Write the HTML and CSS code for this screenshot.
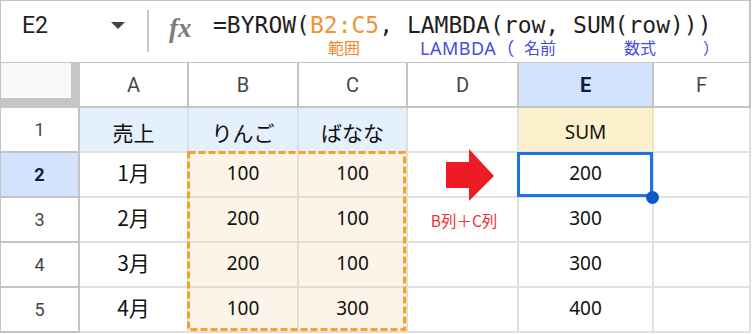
FILE: index.html
```html
<!DOCTYPE html>
<html lang="ja">
<head>
    <meta charset="UTF-8">
    <title>BYROW</title>
    <link rel="stylesheet" href="styles.css">
</head>
<body>
    <div class="sheet">
        <div class="formula-bar">
            <div class="name-box">
                <span class="cell-ref">E2</span>
                <span class="caret"></span>
            </div>
            <div class="divider"></div>
            <div class="fx">fx</div>
            <div class="formula">
                <div class="formula-text">=BYROW(<span class="range">B2:C5</span>, LAMBDA(row, SUM(row)))</div>
                <div class="notes">
                    <span class="note note-range">範囲</span>
                    <span class="note note-lambda">LAMBDA（</span>
                    <span class="note note-name">名前</span>
                    <span class="note note-expr">数式</span>
                    <span class="note note-close">）</span>
                </div>
            </div>
        </div>

        <div class="grid">
            <!-- column headers -->
            <div class="corner"><div class="corner-inner"></div></div>
            <div class="col-head">A</div>
            <div class="col-head">B</div>
            <div class="col-head">C</div>
            <div class="col-head">D</div>
            <div class="col-head active">E</div>
            <div class="col-head">F</div>

            <!-- row 1 -->
            <div class="row-head">1</div>
            <div class="cell title jp">売上</div>
            <div class="cell title jp">りんご</div>
            <div class="cell title jp">ばなな</div>
            <div class="cell"></div>
            <div class="cell sum-title">SUM</div>
            <div class="cell"></div>

            <!-- row 2 -->
            <div class="row-head active">2</div>
            <div class="cell jp">1月</div>
            <div class="cell copied">100</div>
            <div class="cell copied">100</div>
            <div class="cell"></div>
            <div class="cell">200</div>
            <div class="cell"></div>

            <!-- row 3 -->
            <div class="row-head">3</div>
            <div class="cell jp">2月</div>
            <div class="cell copied">200</div>
            <div class="cell copied">100</div>
            <div class="cell note-red">B列＋C列</div>
            <div class="cell">300</div>
            <div class="cell"></div>

            <!-- row 4 -->
            <div class="row-head">4</div>
            <div class="cell jp">3月</div>
            <div class="cell copied">200</div>
            <div class="cell copied">100</div>
            <div class="cell"></div>
            <div class="cell">300</div>
            <div class="cell"></div>

            <!-- row 5 -->
            <div class="row-head">5</div>
            <div class="cell jp">4月</div>
            <div class="cell copied">100</div>
            <div class="cell copied">300</div>
            <div class="cell"></div>
            <div class="cell">400</div>
            <div class="cell"></div>

            <!-- overlays -->
            <svg class="copy-range" width="219" height="180" viewBox="0 0 219 180">
                <rect x="1.5" y="1.5" width="216" height="177" fill="none" stroke="#f6a02d" stroke-width="3" stroke-dasharray="7 3"/>
            </svg>
            <span class="active-cell"><span class="fill-handle"></span></span>
            <svg class="arrow" width="54" height="56" viewBox="0 0 54 56">
                <polygon points="2,15 25,15 25,2 50,29 25,54 25,41 2,41" fill="#ed1c24"/>
            </svg>
        </div>
    </div>
</body>
</html>
```

FILE: styles.css
```css
body {
    margin: 0;
    background-color: #fff;
    font-family: "Noto Sans", "Noto Sans CJK JP", sans-serif;
}

.sheet {
    width: 750px;
    border-top: 1px solid #c4c4c4;
    border-left: 1px solid #c4c4c4;
}

/* formula bar */

.formula-bar {
    display: flex;
    height: 61px;
    border-bottom: 1px solid #c4c4c4;
    border-right: 2px solid #c4c4c4;
}

.name-box {
    width: 146px;
    box-sizing: border-box;
    padding: 11px 0 0 21px;
    display: flex;
    align-items: flex-start;
}

.cell-ref {
    font-family: Roboto, sans-serif;
    font-size: 23px;
    line-height: 27px;
    color: #1f1f1f;
    width: 89px;
}

.caret {
    margin-top: 10px;
    width: 0;
    height: 0;
    border-left: 7px solid transparent;
    border-right: 7px solid transparent;
    border-top: 7px solid #444;
}

.divider {
    width: 2px;
    height: 42px;
    margin-top: 9px;
    background-color: #c8c8c8;
}

.fx {
    margin: 12px 0 0 20px;
    width: 44px;
    font-family: "Liberation Serif", serif;
    font-style: italic;
    font-weight: bold;
    font-size: 27px;
    line-height: 30px;
    color: #7c7c7c;
}

.formula {
    display: flex;
    flex-direction: column;
    padding-top: 11px;
}

.formula-text {
    font-family: "DejaVu Sans Mono", monospace;
    font-size: 23px;
    line-height: 27px;
    color: #1f1f1f;
    white-space: pre;
}

.range {
    color: #f39237;
}

.notes {
    display: flex;
    font-family: "Noto Sans", "Noto Sans CJK JP", sans-serif;
    font-size: 16px;
    line-height: 18px;
    color: #4a4adf;
    white-space: pre;
}

.note-range {
    margin-left: 115px;
    width: 92px;
    color: #f08a30;
}

.note-lambda {
    width: 104px;
    font-size: 18px;
    letter-spacing: 0.5px;
}

.note-name {
    width: 100px;
}

.note-expr {
    width: 79px;
}

/* grid */

.grid {
    position: relative;
    display: grid;
    grid-template-columns: 79px 109px 110px 109px 111px 135px 97px;
    grid-auto-rows: 45px;
}

.grid > div {
    box-sizing: border-box;
    display: flex;
    align-items: center;
    justify-content: center;
    border-right: 2px solid #e1e1e1;
    border-bottom: 2px solid #e1e1e1;
}

.grid > .corner {
    align-items: flex-start;
    justify-content: flex-start;
    background-color: #c6c6c6;
    border-color: #c6c6c6;
}

.corner-inner {
    width: 70px;
    height: 35px;
    background-color: #f8f9fa;
}

.grid > .col-head {
    font-family: Roboto, sans-serif;
    font-size: 20px;
    color: #444746;
    border-color: #c4c4c4;
}

.grid > .row-head {
    font-family: Roboto, sans-serif;
    font-size: 18px;
    color: #444746;
    border-color: #c4c4c4;
}

.grid > .active {
    background-color: #d3e3fd;
    color: #0b1f45;
    font-weight: bold;
}

.grid > .cell {
    font-size: 19px;
    color: #111;
    padding-bottom: 3px;
}

.grid > .jp {
    font-family: "Noto Sans CJK JP", sans-serif;
    font-size: 21px;
    padding-bottom: 5px;
}

.grid > .title {
    background-color: #e4f0fc;
    border-right-color: #d6e0ea;
    padding: 5px 0 0;
}

.grid > .sum-title {
    background-color: #fdf0cd;
    border-right-color: #f0e2bf;
    padding: 5px 0 0;
}

.grid > .copied {
    background-color: #fcf4e8;
    border-color: #e8dccc;
}

.grid > .note-red {
    font-family: "Noto Sans CJK JP", sans-serif;
    font-size: 15.5px;
    color: #e8343c;
    padding: 0 0 0 3px;
}

/* overlays */

.copy-range {
    position: absolute;
    left: 186px;
    top: 88px;
}

.active-cell {
    position: absolute;
    left: 516px;
    top: 89px;
    width: 136px;
    height: 45px;
    box-sizing: border-box;
    border: 3px solid #1a73e8;
}

.fill-handle {
    position: absolute;
    left: 126px;
    top: 36px;
    width: 13px;
    height: 13px;
    border-radius: 50%;
    background-color: #0b57d0;
}

.arrow {
    position: absolute;
    left: 443px;
    top: 84px;
}
```
